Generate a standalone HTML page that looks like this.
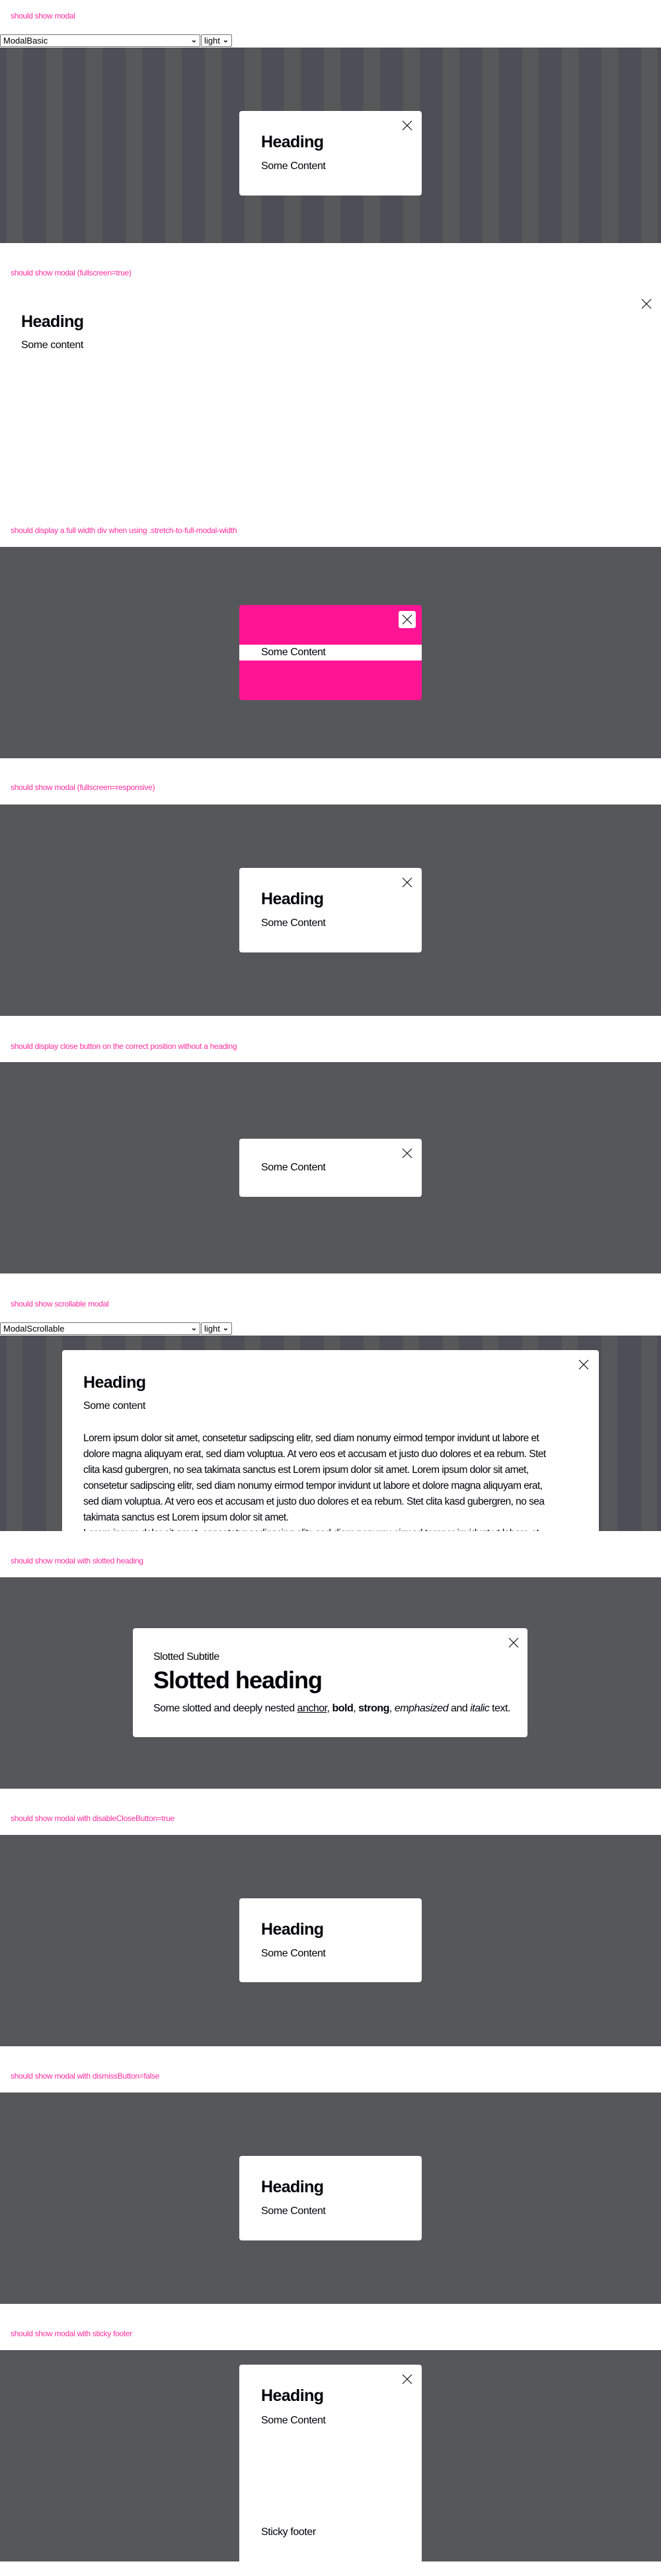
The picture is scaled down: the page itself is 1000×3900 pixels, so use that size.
<!DOCTYPE html>
<html><head><meta charset="utf-8">
<style>
*{margin:0;padding:0;box-sizing:border-box}
html,body{width:1000px;height:3900px;background:#fff;overflow:hidden}
body{position:relative;font-family:"Liberation Sans",sans-serif;color:#010205}
.lbl{position:absolute;left:16px;font-size:12px;line-height:14px;color:#ff2d9e;letter-spacing:-0.3px;white-space:nowrap}
.sel{position:absolute;height:19px;border:1px solid #767676;border-radius:2px;background:#fff;font-size:13px;line-height:17px;padding-left:4px;color:#000}
.sel span.ch{position:absolute;right:4px;top:0;font-size:11px;font-weight:bold}
.dark{position:absolute;left:0;width:1000px;background:#56575a;overflow:hidden}
.stripes{background:repeating-linear-gradient(90deg,#4e4e56 0px,#4e4e56 10px,#575859 10px,#575859 35px,#4e4e56 35px,#4e4e56 60px)}
.stripes2{background:repeating-linear-gradient(90deg,#4e4e56 0px,#4e4e56 10px,#575859 10px,#575859 34px,#4e4e56 34px,#4e4e56 60px)}
.modal{position:absolute;background:#fff;border-radius:4px;overflow:hidden}
.h{position:absolute;left:33px;font-size:25px;font-weight:bold;line-height:32px;letter-spacing:-0.6px;white-space:nowrap}
.t{position:absolute;left:33px;font-size:16px;line-height:24px;letter-spacing:-0.4px;white-space:nowrap}
.x{position:absolute;width:16px;height:16px}
.x svg{display:block}
</style></head><body>

<!-- 1 -->
<div class="lbl" style="top:17px">should show modal</div>
<div class="sel" style="left:0;top:52px;width:303px">ModalBasic<span class="ch">&#8964;</span></div>
<div class="sel" style="left:304px;top:52px;width:47px">light<span class="ch">&#8964;</span></div>
<div class="dark stripes" style="top:72px;height:296px"></div>
<div class="modal" style="left:362px;top:168px;width:276px;height:128px">
  <div class="x" style="left:246px;top:14px"><svg width="16" height="16" viewBox="0 0 16 16"><path d="M1 1L15 15M15 1L1 15" stroke="#111" stroke-width="1.2" fill="none"/></svg></div>
  <div class="h" style="top:31px">Heading</div>
  <div class="t" style="top:72px">Some Content</div>
</div>

<!-- 2 fullscreen -->
<div class="lbl" style="top:406px">should show modal (fullscreen=true)</div>
<div class="x" style="left:970px;top:452px"><svg width="16" height="16" viewBox="0 0 16 16"><path d="M1 1L15 15M15 1L1 15" stroke="#111" stroke-width="1.2" fill="none"/></svg></div>
<div class="h" style="left:32px;top:471px">Heading</div>
<div class="t" style="left:32px;top:511px">Some content</div>

<!-- 3 stretch -->
<div class="lbl" style="top:796px">should display a full width div when using .stretch-to-full-modal-width</div>
<div class="dark" style="top:828px;height:320px"></div>
<div class="modal" style="left:362px;top:916px;width:276px;height:144px;background:#ff1493">
  <div style="position:absolute;left:241px;top:9px;width:26px;height:26px;background:#fff;border-radius:3px"></div>
  <div class="x" style="left:246px;top:14px"><svg width="16" height="16" viewBox="0 0 16 16"><path d="M1 1L15 15M15 1L1 15" stroke="#111" stroke-width="1.2" fill="none"/></svg></div>
  <div style="position:absolute;left:0;top:60px;width:276px;height:24px;background:#fff"></div>
  <div class="t" style="top:60px">Some Content</div>
</div>

<!-- 4 responsive -->
<div class="lbl" style="top:1185px">should show modal (fullscreen=responsive)</div>
<div class="dark" style="top:1218px;height:320px"></div>
<div class="modal" style="left:362px;top:1314px;width:276px;height:128px">
  <div class="x" style="left:246px;top:14px"><svg width="16" height="16" viewBox="0 0 16 16"><path d="M1 1L15 15M15 1L1 15" stroke="#111" stroke-width="1.2" fill="none"/></svg></div>
  <div class="h" style="top:31px">Heading</div>
  <div class="t" style="top:72px">Some Content</div>
</div>

<!-- 5 no heading -->
<div class="lbl" style="top:1577px">should display close button on the correct position without a heading</div>
<div class="dark" style="top:1608px;height:320px"></div>
<div class="modal" style="left:362px;top:1724px;width:276px;height:88px">
  <div class="x" style="left:246px;top:14px"><svg width="16" height="16" viewBox="0 0 16 16"><path d="M1 1L15 15M15 1L1 15" stroke="#111" stroke-width="1.2" fill="none"/></svg></div>
  <div class="t" style="top:32px">Some Content</div>
</div>

<!-- 6 scrollable -->
<div class="lbl" style="top:1967px">should show scrollable modal</div>
<div class="sel" style="left:0;top:2002px;width:303px">ModalScrollable<span class="ch">&#8964;</span></div>
<div class="sel" style="left:304px;top:2002px;width:47px">light<span class="ch">&#8964;</span></div>
<div class="dark stripes2" style="top:2022px;height:296px"></div>
<div class="modal" style="left:94px;top:2044px;width:812px;height:274px;border-radius:4px 4px 0 0">
  <div class="x" style="left:781px;top:14px"><svg width="16" height="16" viewBox="0 0 16 16"><path d="M1 1L15 15M15 1L1 15" stroke="#111" stroke-width="1.2" fill="none"/></svg></div>
  <div class="h" style="left:32px;top:33px">Heading</div>
  <div class="t" style="left:32px;top:73px">Some content</div>
  <div class="t" style="left:32px;top:122px;line-height:24px;font-size:15.5px;letter-spacing:-0.55px">
Lorem ipsum dolor sit amet, consetetur sadipscing elitr, sed diam nonumy eirmod tempor invidunt ut labore et<br>
dolore magna aliquyam erat, sed diam voluptua. At vero eos et accusam et justo duo dolores et ea rebum. Stet<br>
clita kasd gubergren, no sea takimata sanctus est Lorem ipsum dolor sit amet. Lorem ipsum dolor sit amet,<br>
consetetur sadipscing elitr, sed diam nonumy eirmod tempor invidunt ut labore et dolore magna aliquyam erat,<br>
sed diam voluptua. At vero eos et accusam et justo duo dolores et ea rebum. Stet clita kasd gubergren, no sea<br>
takimata sanctus est Lorem ipsum dolor sit amet.<br>
Lorem ipsum dolor sit amet, consetetur sadipscing elitr, sed diam nonumy eirmod tempor invidunt ut labore et
  </div>
</div>

<!-- 7 slotted -->
<div class="lbl" style="top:2356px">should show modal with slotted heading</div>
<div class="dark" style="top:2388px;height:320px"></div>
<div class="modal" style="left:201px;top:2465px;width:597px;height:165px">
  <div class="x" style="left:568px;top:14px"><svg width="16" height="16" viewBox="0 0 16 16"><path d="M1 1L15 15M15 1L1 15" stroke="#111" stroke-width="1.2" fill="none"/></svg></div>
  <div class="t" style="left:31px;top:32px;letter-spacing:-0.5px">Slotted Subtitle</div>
  <div class="h" style="left:31px;top:56px;font-size:36px;line-height:46px;letter-spacing:-1px">Slotted heading</div>
  <div class="t" style="left:31px;top:110px;letter-spacing:-0.5px">Some slotted and deeply nested <u>anchor</u>, <b>bold</b>, <b>strong</b>, <i>emphasized</i> and <i>italic</i> text.</div>
</div>

<!-- 8 disableCloseButton -->
<div class="lbl" style="top:2746px">should show modal with disableCloseButton=true</div>
<div class="dark" style="top:2778px;height:320px"></div>
<div class="modal" style="left:362px;top:2874px;width:276px;height:127px">
  <div class="h" style="top:31px">Heading</div>
  <div class="t" style="top:72px">Some Content</div>
</div>

<!-- 9 dismissButton=false -->
<div class="lbl" style="top:3136px">should show modal with dismissButton=false</div>
<div class="dark" style="top:3168px;height:320px"></div>
<div class="modal" style="left:362px;top:3264px;width:276px;height:128px">
  <div class="h" style="top:31px">Heading</div>
  <div class="t" style="top:72px">Some Content</div>
</div>

<!-- 10 sticky footer -->
<div class="lbl" style="top:3526px">should show modal with sticky footer</div>
<div class="dark" style="top:3558px;height:320px"></div>
<div class="modal" style="left:362px;top:3580px;width:276px;height:298px;border-radius:4px 4px 0 0">
  <div class="x" style="left:246px;top:14px"><svg width="16" height="16" viewBox="0 0 16 16"><path d="M1 1L15 15M15 1L1 15" stroke="#111" stroke-width="1.2" fill="none"/></svg></div>
  <div class="h" style="top:31px">Heading</div>
  <div class="t" style="top:73px">Some Content</div>
  <div class="t" style="top:242px">Sticky footer</div>
</div>

</body></html>
